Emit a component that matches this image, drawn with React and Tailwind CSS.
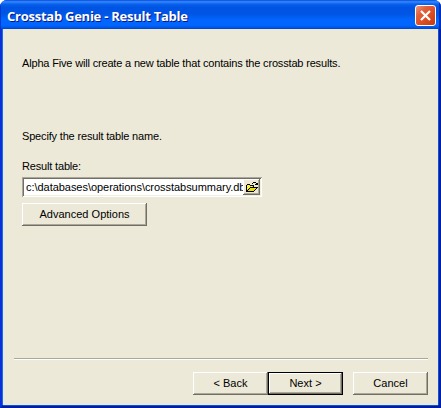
import React from 'react';

const FOLDER = [
  '.......kkk..',
  '......k...kk',
  '.kkk.....kkk',
  'kywykkkk....',
  'kwywywyk....',
  'kywykkkkkkkk',
  'kwykyyyyyyk.',
  'kykyyyyyyk..',
  'kkyyyyyyk...',
  'kkkkkkkk....',
];
const COLORS = { k: '#000000', y: '#e6dc10', w: '#ffff70' };

function FolderIcon() {
  return (
    <svg width="12" height="10" viewBox="0 0 12 10" shapeRendering="crispEdges">
      {FOLDER.flatMap((row, y) =>
        [...row].map((c, x) =>
          c === '.' ? null : <rect key={`${x}-${y}`} x={x} y={y} width="1" height="1" fill={COLORS[c]} />
        )
      )}
    </svg>
  );
}

function Bevel({ className, children }) {
  return (
    <button
      className={`flex h-[23px] items-center justify-center bg-[#ece9d8] pb-px tracking-[0.02px] whitespace-nowrap shadow-[inset_-1px_-1px_#716f64,inset_1px_1px_#ffffff,inset_-2px_-2px_#aca899] ${className}`}
    >
      {children}
    </button>
  );
}

export default function App() {
  return (
    <div className="h-[408px] w-[441px] bg-white font-['Liberation_Sans',Arial,sans-serif] text-[11px] leading-[13px] tracking-[-0.17px] text-black">
      <div className="flex h-full flex-col overflow-hidden rounded-t-[7px] bg-[#0831d9]">
        <header className="flex h-[29px] shrink-0 items-center justify-between bg-[linear-gradient(to_bottom,#0831d9_0px,#2a7df5_1px,#2b87fa_2px,#0a62ee_4px,#0054e3_7px,#0055e5_14px,#0066ff_20px,#0066ff_25px,#005bf0_27px,#0042c8_29px)] pr-[5px] pl-[7px] shadow-[inset_1px_0_#0038d0,inset_-2px_0_#0030b8]">
          <h1 className="pt-[3px] font-['Open_Sans',sans-serif] text-[13px] leading-[18px] font-bold tracking-[-0.25px] whitespace-nowrap text-white [text-shadow:1px_1px_#0a1883]">
            Crosstab Genie - Result Table
          </h1>
          <button className="mt-[2px] flex size-[21px] items-center justify-center rounded-[3px] border border-white bg-[linear-gradient(135deg,#eb977c_0%,#e2603b_30%,#dc4a20_65%,#c23a10_100%)]">
            <svg width="13" height="13" viewBox="0 0 13 13" stroke="#fff" strokeWidth="2.2">
              <path d="M2 2L11 11M11 2L2 11" />
            </svg>
          </button>
        </header>
        <div className="flex grow flex-col border-x-[3px] border-t-0 border-b-[3px] border-r-[#001ea0] border-b-[#001ea0] border-l-[#0831d9]">
          <main className="flex grow flex-col bg-[#ece9d8] pr-[10px] pl-[11px] shadow-[-1px_0_#166aee,1px_0_#0855dd,0_1px_#0855dd]">
            <section className="flex h-[329px] flex-col items-start pl-[8px]">
              <p className="mt-[28px] whitespace-nowrap">
                Alpha Five will create a new table that contains the crosstab results.
              </p>
              <p className="mt-[60px] whitespace-nowrap">Specify the result table name.</p>
              <label className="mt-[17px] whitespace-nowrap">Result table:</label>
              <div className="mt-[4px] flex h-[20px] w-[240px] bg-white p-[2px] shadow-[inset_1px_1px_#aca899,inset_-1px_-1px_#ffffff,inset_2px_2px_#716f64,inset_-2px_-2px_#f1efe2]">
                <div className="w-[219px] overflow-hidden pl-[2px] leading-[16px] tracking-[-0.04px] whitespace-nowrap">
                  c:\databases\operations\crosstabsummary.dbf
                </div>
                <button className="flex h-[16px] w-[17px] items-center justify-center bg-[#ece9d8] shadow-[inset_-1px_-1px_#716f64,inset_1px_1px_#ffffff,inset_-2px_-2px_#aca899]">
                  <FolderIcon />
                </button>
              </div>
              <Bevel className="mt-[6px] w-[125px]">Advanced Options</Bevel>
            </section>
            <hr className="h-[2px] border-t border-b border-t-[#aca899] border-b-white" />
            <footer className="mt-[12px] flex justify-end">
              <Bevel className="w-[75px]">&lt; Back</Bevel>
              <div className="flex w-[75px] bg-black p-px">
                <Bevel className="h-[21px]! grow">Next &gt;</Bevel>
              </div>
              <Bevel className="ml-[10px] w-[75px]">Cancel</Bevel>
            </footer>
          </main>
        </div>
      </div>
    </div>
  );
}
